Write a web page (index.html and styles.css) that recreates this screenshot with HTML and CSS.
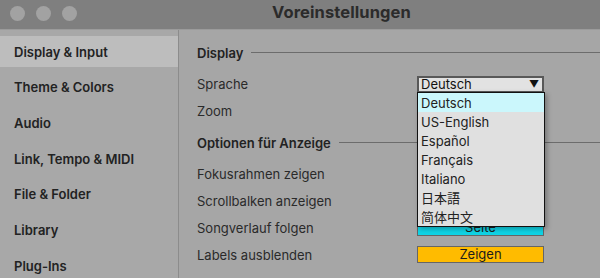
FILE: index.html
```html
<!DOCTYPE html>
<html lang="de">
<head>
    <meta charset="UTF-8">
    <title>Voreinstellungen</title>
    <link rel="stylesheet" href="styles.css">
</head>
<body>
    <div class="window">
        <div class="titlebar">
            <div class="lights">
                <span class="light"></span>
                <span class="light"></span>
                <span class="light"></span>
            </div>
            <div class="title">Voreinstellungen</div>
        </div>
        <div class="main">
            <!-- Sidebar -->
            <ul class="sidebar">
                <li class="active">Display &amp; Input</li>
                <li>Theme &amp; Colors</li>
                <li>Audio</li>
                <li>Link, Tempo &amp; MIDI</li>
                <li>File &amp; Folder</li>
                <li>Library</li>
                <li>Plug-Ins</li>
            </ul>

            <!-- Settings -->
            <div class="content">
                <div class="section-head"><span>Display</span><span class="rule"></span></div>
                <div class="row">
                    <span class="label">Sprache</span>
                    <div class="control select-wrap">
                        <div class="select">
                            <span>Deutsch</span>
                            <span class="arrow">&#9660;</span>
                        </div>
                        <ul class="menu">
                            <li class="hover">Deutsch</li>
                            <li>US-English</li>
                            <li>Español</li>
                            <li>Français</li>
                            <li>Italiano</li>
                            <li class="cjk-jp">日本語</li>
                            <li class="cjk-sc">简体中文</li>
                        </ul>
                    </div>
                </div>
                <div class="row"><span class="label">Zoom</span></div>
                <div class="section-head"><span>Optionen für Anzeige</span><span class="rule"></span></div>
                <div class="row"><span class="label">Fokusrahmen zeigen</span></div>
                <div class="row"><span class="label">Scrollbalken anzeigen</span></div>
                <div class="row">
                    <span class="label">Songverlauf folgen</span>
                    <div class="control"><div class="btn btn-cyan">Seite</div></div>
                </div>
                <div class="row">
                    <span class="label">Labels ausblenden</span>
                    <div class="control"><div class="btn btn-yellow">Zeigen</div></div>
                </div>
            </div>
        </div>
    </div>
</body>
</html>
```

FILE: styles.css
```css
* {
    box-sizing: border-box;
}
body {
    margin: 0;
    font-family: Inter, "Noto Sans", sans-serif;
    font-size: 13px;
    color: #262626;
    background: #a5a5a5;
    overflow: hidden;
}
.window {
    width: 600px;
    height: 278px;
    display: flex;
    flex-direction: column;
    overflow: hidden;
}
.titlebar {
    flex-shrink: 0;
    height: 30px;
    background: #7f7f7f;
    border-bottom: 1px solid #9b9b9b;
    display: flex;
    align-items: center;
    position: relative;
}
.lights {
    display: flex;
    gap: 11px;
    padding-left: 10px;
    margin-top: -3px;
}
.light {
    width: 15px;
    height: 15px;
    border-radius: 50%;
    background: #a2a2a2;
}
.title {
    position: absolute;
    left: 272px;
    top: 2px;
    font-size: 16.5px;
    font-weight: 700;
    color: #2b2b2b;
    letter-spacing: 0.1px;
}
.main {
    flex: 1;
    min-height: 0;
    display: flex;
}
.sidebar {
    list-style: none;
    margin: 0;
    padding: 6px 0 0;
    width: 179px;
    background: #a8a8a8;
    border-right: 1px solid #8c8c8c;
}
.sidebar li {
    height: 31px;
    margin-bottom: 4.7px;
    padding-left: 14px;
    display: flex;
    align-items: center;
    font-weight: 600;
    color: #222;
}
.sidebar li.active {
    background: #bdbdbd;
}
.content {
    flex: 1;
    padding: 4px 0 0 18px;
    background: #a6a6a6;
}
.section-head {
    height: 27px;
    margin: 5px 0 4px;
    display: flex;
    align-items: center;
    gap: 8px;
    font-weight: 600;
    color: #222;
}
.section-head .rule {
    flex: 1;
    height: 1px;
    background: #6c6c6c;
}
.row {
    height: 27px;
    display: grid;
    grid-template-columns: 220px 127px;
    align-items: center;
    color: #2a2a2a;
}
.control {
    position: relative;
}
.select {
    height: 17px;
    margin-top: 1px;
    border: 2px solid #585858;
    background: #e2e2e2;
    display: flex;
    align-items: center;
    justify-content: space-between;
    padding: 0 3px 0 2px;
    color: #111;
}
.arrow {
    font-size: 10px;
    color: #111;
}
.menu {
    position: absolute;
    top: 17px;
    left: 0;
    width: 128px;
    list-style: none;
    margin: 0;
    padding: 0;
    background: #e0e0e0;
    border: 1.5px solid #111;
    box-shadow: 2px 2px 5px rgba(0, 0, 0, 0.3);
    z-index: 5;
}
.menu li {
    height: 19px;
    line-height: 20px;
    padding-left: 3px;
    color: #222;
}
.menu li.hover {
    background: #cbf7fc;
}
.cjk-jp {
    font-family: Inter, "Noto Sans CJK JP", sans-serif;
}
.cjk-sc {
    font-family: Inter, "Noto Sans CJK SC", sans-serif;
}
.btn {
    height: 17px;
    border: 1px solid #666;
    text-align: center;
    line-height: 15px;
    color: #1c1c1c;
}
.btn-cyan {
    background: #10d4e6;
}
.btn-yellow {
    background: #ffbb00;
}
```
